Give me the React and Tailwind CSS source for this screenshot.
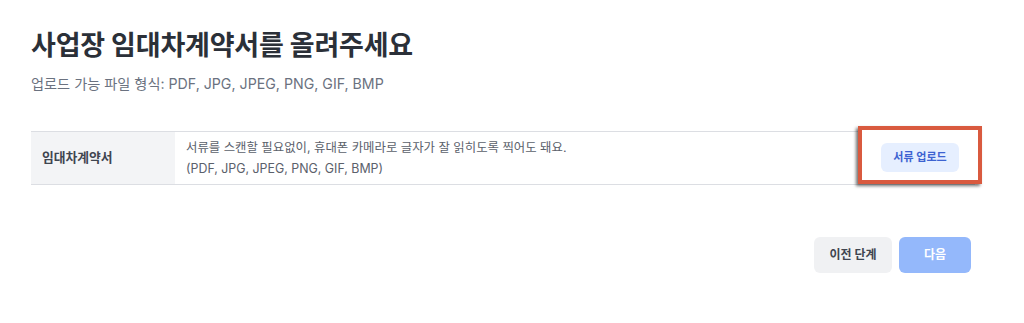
export default function App() {
    return (
        <div className="w-[1024px] h-[323px] bg-white font-['Inter','Noto_Sans_CJK_KR',sans-serif] overflow-hidden">
            <div className="pl-[31px] pr-[49px] pt-[27px]">
                <h1 className="text-[27px] leading-[38px] font-bold text-[#2b3038] tracking-[-0.2px]">
                    사업장 임대차계약서를 올려주세요
                </h1>
                <p className="mt-[9px] text-[14.2px] leading-[20px] text-[#6b7280]">
                    업로드 가능 파일 형식: PDF, JPG, JPEG, PNG, GIF, BMP
                </p>

                <div className="relative mt-[37px] flex border-y border-[#dcdee3] h-[54px]">
                    <div className="w-[144px] bg-[#f3f4f6] flex items-center pl-[11px] text-[12.8px] font-semibold text-[#3f4550]">
                        임대차계약서
                    </div>
                    <div className="flex-1 flex flex-col justify-center pl-[11px] text-[12.4px] leading-[21px] text-[#5b616b]">
                        <div>서류를 스캔할 필요없이, 휴대폰 카메라로 글자가 잘 읽히도록 찍어도 돼요.</div>
                        <div>(PDF, JPG, JPEG, PNG, GIF, BMP)</div>
                    </div>
                    <div className="absolute left-[827px] top-[-6px] w-[124px] h-[58px] bg-white border-[4px] border-[#d95a3f] shadow-[-2px_2px_3px_rgba(0,0,0,0.55)] flex items-center justify-center pt-[4px]">
                        <button className="w-[78px] h-[29px] rounded-[6px] bg-[#e6efff] text-[#3d63d1] text-[11px] font-semibold">
                            서류 업로드
                        </button>
                    </div>
                </div>

                <div className="mt-[52px] flex justify-end gap-[7px] pr-[4px]">
                    <button className="w-[78px] h-[36px] rounded-[6px] bg-[#f0f1f3] text-[#3f4550] text-[12px] font-semibold">
                        이전 단계
                    </button>
                    <button className="w-[72px] h-[36px] rounded-[6px] bg-[#94b8fb] text-white text-[12px] font-semibold">
                        다음
                    </button>
                </div>
            </div>
        </div>
    );
}
